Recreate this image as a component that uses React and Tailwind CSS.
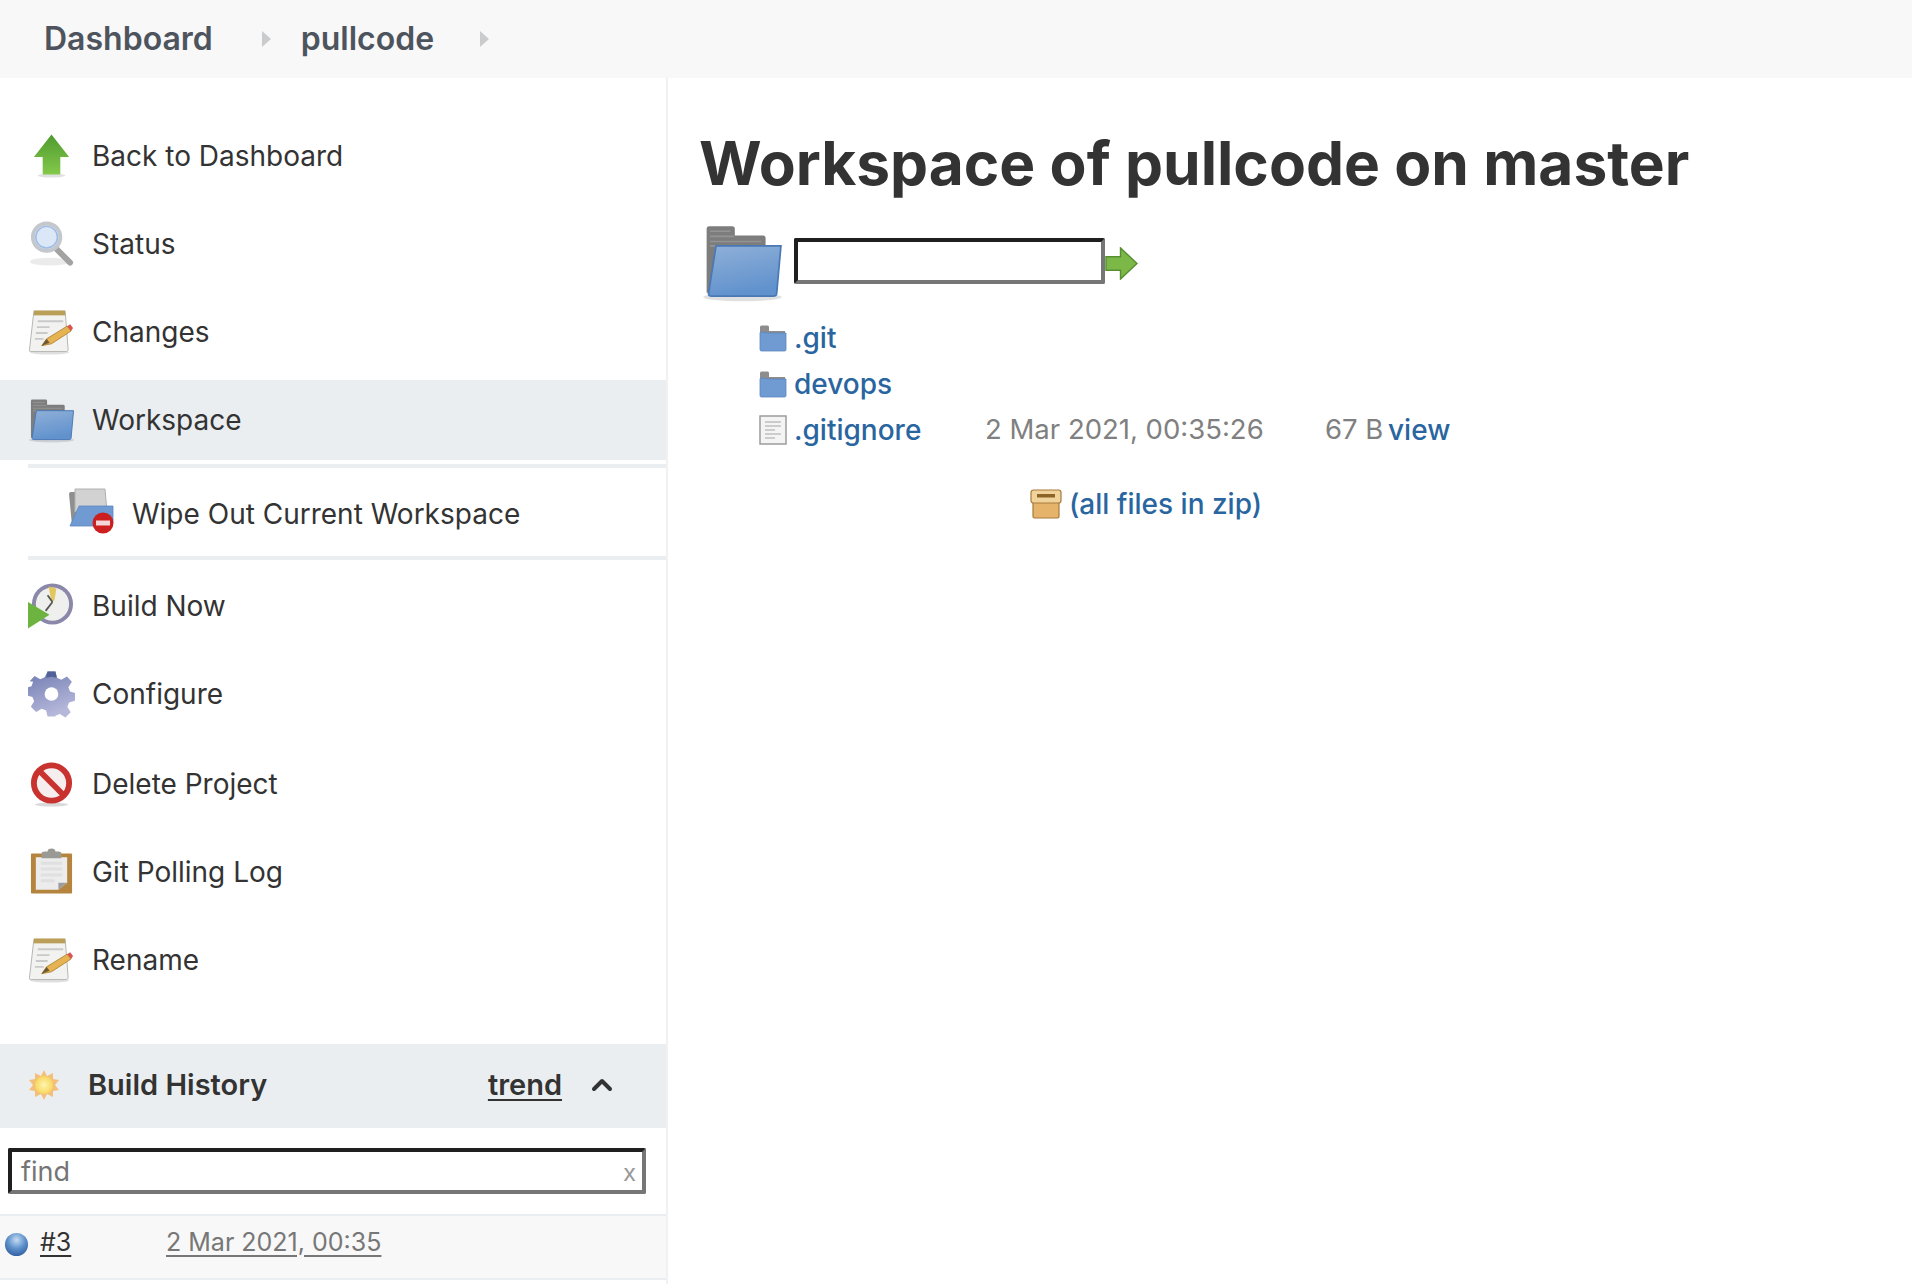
import { useId } from 'react';
import { ChevronUp } from 'lucide-react';

const fontStack = "font-['Inter','Liberation_Sans',sans-serif]";

/* ---------- icons (small redraws of the old Tango style Jenkins icons) ---------- */

const FolderIcon = ({ className }) => {
  const id = useId();
  return (
    <svg viewBox="0 0 48 48" className={className}>
      <defs>
        <linearGradient id={id} x1="0" y1="0" x2="0.300" y2="1">
          <stop offset="0" stopColor="#8fb0d8" />
          <stop offset="1" stopColor="#6192cd" />
        </linearGradient>
      </defs>
      <ellipse cx="24" cy="44.500" rx="23" ry="2.500" fill="#000" opacity="0.12" />
      <path d="M3 42V4.500Q3 3 4.500 3H18q1.500 0 1.500 1.500V8.500H36q1.500 0 1.500 1.500V16H10L6 42Z" fill="#7d7d7d" />
      <path d="M5 6h12M5 9h14M5 12h30M5 14.500h30" stroke="#949494" strokeWidth="1" />
      <path d="M8.500 14.500H46.500L44 42.500Q43.800 44 42 44H6Q3.800 44 4.200 42Z" fill={`url(#${id})`} stroke="#4a78b5" strokeWidth="1" />
    </svg>
  );
};

const SmallFolder = ({ className }) => (
  <svg viewBox="0 0 30 30" className={className}>
    <path d="M2 24V4q0-1.500 1.500-1.500h6q1.500 0 1.500 1.500v4h16v5H2Z" fill="#8d8d8d" />
    <path d="M3 9 11 10 28 10V26.500Q28 28 26.500 28H3.500Q2 28 2 26.500V10Q2 9 3 9Z" fill="#6f9bd2" stroke="#5c87bf" strokeWidth="0.800" />
  </svg>
);

const UpArrow = ({ className }) => {
  const id = useId();
  return (
    <svg viewBox="0 0 48 48" className={className}>
      <defs>
        <linearGradient id={id} x1="0" y1="0" x2="0" y2="1">
          <stop offset="0" stopColor="#4f9a2f" />
          <stop offset="1" stopColor="#83c94a" />
        </linearGradient>
      </defs>
      <ellipse cx="24" cy="44" rx="14" ry="2" fill="#000" opacity="0.12" />
      <path d="M24 2 42 25H33V43H15V25H6Z" fill={`url(#${id})`} />
    </svg>
  );
};

const SearchIcon = ({ className }) => (
  <svg viewBox="0 0 48 48" className={className}>
    <ellipse cx="22" cy="42" rx="20" ry="4" fill="#000" opacity="0.08" />
    <path d="M29 29 43 43" stroke="#a3a3a3" strokeWidth="6" strokeLinecap="round" />
    <circle cx="19" cy="17" r="14" fill="#dbe7f6" stroke="#c4c7cb" strokeWidth="4" />
    <circle cx="19" cy="17" r="11" fill="none" stroke="#9dbce6" strokeWidth="1.500" />
  </svg>
);

const NotepadIcon = ({ className }) => (
  <svg viewBox="0 0 48 48" className={className}>
    <ellipse cx="22" cy="45" rx="20" ry="2" fill="#000" opacity="0.12" />
    <path d="M6 3H38L41 42Q41 44 39 44H3Q1 44 1.500 42Z" fill="#f2f2f0" stroke="#b5b5b0" strokeWidth="1" />
    <rect x="6" y="2" width="32" height="5" fill="#b99f58" />
    <path d="M10 13H36M9 19H22M8 25H20M7 31H16" stroke="#c9c9c9" strokeWidth="2" />
    <path d="M14 38 19 31 40 18 44 23 24 36Z" fill="#e6b352" stroke="#a87a28" strokeWidth="0.800" />
    <path d="M40 18 44 23 46 20 43 16Z" fill="#d9534f" />
    <path d="M14 38 19 31 22 35Z" fill="#6e5a35" />
  </svg>
);

const WipeIcon = ({ className }) => (
  <svg viewBox="0 0 48 48" className={className}>
    <path d="M3 6q0-2 2-2h8l2 3v30H6Z" fill="#8f8f8f" />
    <path d="M9 1H39L41 24H9Z" fill="#d2d2d2" stroke="#b0b0b0" strokeWidth="1" />
    <path d="M13 18 H47V34L42 38H4Z" fill="#6f9bd2" stroke="#5c87bf" strokeWidth="0.800" />
    <circle cx="37" cy="35" r="10.500" fill="#cc1f1f" />
    <rect x="30" y="32.500" width="14" height="5" fill="#f4d6d6" />
  </svg>
);

const BuildIcon = ({ className }) => (
  <svg viewBox="0 0 48 48" className={className}>
    <circle cx="25" cy="22" r="21" fill="#8a87a8" />
    <circle cx="25" cy="22" r="17" fill="#efefee" />
    <path d="M21 4 29 6 27 18 24 20Z" fill="#e2c65e" />
    <path d="M25 20 20 13M25 20 18 29" stroke="#555" strokeWidth="1.800" />
    <path d="M0 20 22 33 0 47Z" fill="#6cb33f" />
  </svg>
);

const GearIcon = ({ className }) => {
  const id = useId();
  return (
    <svg viewBox="0 0 48 48" className={className}>
      <defs>
        <linearGradient id={id} x1="0" y1="0" x2="0.400" y2="1">
          <stop offset="0" stopColor="#6f7bb0" />
          <stop offset="1" stopColor="#b6b8da" />
        </linearGradient>
      </defs>
      <path
        d="M20 1h8l1.500 6.500 4.500 1.900 5.800-3.300 5 5.500-3.500 5.500 1.600 4.400 5.100 1.500v8l-6 1.600-1.800 4.400 3.400 5.600-5.400 5.300-5.700-3.400-4.500 1.800L28 47h-8l-1.500-6.200-4.500-1.800-5.700 3.400-5.400-5.300 3.400-5.600-1.800-4.400-6-1.600v-8l5.100-1.500 1.600-4.400L1.700 11.100l5-5.500L12.500 8.900 17 7z"
        fill={`url(#${id})`}
      />
      <path d="M20 1h8l1.500 6.500-5.500-1-5.500 1z" fill="#4f6196" />
      <circle cx="24" cy="24" r="7" fill="#ffffff" />
    </svg>
  );
};

const DeleteIcon = ({ className }) => (
  <svg viewBox="0 0 48 48" className={className}>
    <ellipse cx="24" cy="45" rx="17" ry="2" fill="#000" opacity="0.15" />
    <circle cx="24" cy="23" r="18" fill="#f6eeee" stroke="#c8322f" strokeWidth="6" />
    <path d="M11 10 37 36" stroke="#c8322f" strokeWidth="6" />
  </svg>
);

const ClipboardIcon = ({ className }) => (
  <svg viewBox="0 0 48 48" className={className}>
    <rect x="3" y="5" width="42" height="41" rx="1" fill="#b5843f" />
    <path d="M8 9H40V35L31 42H8Z" fill="#ececec" />
    <path d="M31 42V35H40Z" fill="#9d9d9d" />
    <path d="M13 15H35M13 21H35M13 27H35M13 33H27" stroke="#e0e0e0" strokeWidth="3" />
    <path d="M14 10V5Q14 3 17 3H20Q20 0 24 0T28 3H31Q34 3 34 5V10Z" fill="#9a9a94" />
  </svg>
);

const SunIcon = ({ className }) => {
  const id = useId();
  return (
    <svg viewBox="0 0 32 32" className={className}>
      <defs>
        <radialGradient id={id}>
          <stop offset="0" stopColor="#fff6b0" />
          <stop offset="1" stopColor="#f8d65e" />
        </radialGradient>
      </defs>
      <path d="M16 1 19 7 25 4 25 10 31 11 27 16 31 21 25 22 25 28 19 25 16 31 13 25 7 28 7 22 1 21 5 16 1 11 7 10 7 4 13 7Z" fill="#f3c07a" />
      <circle cx="16" cy="16" r="9" fill={`url(#${id})`} />
    </svg>
  );
};

const BlueBall = ({ className }) => {
  const id = useId();
  return (
    <svg viewBox="0 0 26 26" className={className}>
      <defs>
        <radialGradient id={id} cx="0.500" cy="0.300" r="0.750">
          <stop offset="0" stopColor="#c6dcf3" />
          <stop offset="0.500" stopColor="#5f92cc" />
          <stop offset="1" stopColor="#2c5a9b" />
        </radialGradient>
      </defs>
      <circle cx="13" cy="13" r="12" fill={`url(#${id})`} />
    </svg>
  );
};

const FileIcon = ({ className }) => (
  <svg viewBox="0 0 30 30" className={className}>
    <rect x="2" y="1" width="26" height="28" fill="#f4f4f4" stroke="#9c9c9c" strokeWidth="1.500" />
    <path d="M7 7H23M7 11H23M7 15H17M7 19H23M7 23H17" stroke="#cccccc" strokeWidth="2" />
  </svg>
);

const BoxIcon = ({ className }) => (
  <svg viewBox="0 0 32 32" className={className}>
    <rect x="3" y="10" width="26" height="20" rx="1.500" fill="#e6b36a" stroke="#a87a3a" strokeWidth="1.200" />
    <rect x="1" y="2" width="30" height="13" rx="2.500" fill="#f0d39b" stroke="#a87a3a" strokeWidth="1.200" />
    <rect x="7" y="6" width="18" height="3.500" fill="#8c6428" />
  </svg>
);

const GoArrow = ({ className }) => (
  <svg viewBox="0 0 34 34" className={className}>
    <path d="M1 10H16V1L33 17 16 33V24H1Z" fill="#7cb848" stroke="#578f30" strokeWidth="1.500" />
  </svg>
);

const Caret = () => <span className="h-0 w-0 border-y-[8px] border-l-[9px] border-y-transparent border-l-[#c9cbcc]" />;

/* ---------- data ---------- */

const topItems = [
  { label: 'Back to Dashboard', icon: UpArrow },
  { label: 'Status', icon: SearchIcon },
  { label: 'Changes', icon: NotepadIcon },
];

const SideItem = ({ label, icon: Icon, className = 'h-[88px]' }) => (
  <div className={`flex items-center gap-[17px] pl-[28px] text-[28px] text-[#333] ${className}`}>
    <Icon className="h-[48px] w-[47px] shrink-0 blur-[0.5px]" />
    <span>{label}</span>
  </div>
);

const App = () => {
  return (
    <div className={`flex h-[1284px] w-[1912px] flex-col overflow-hidden bg-white ${fontStack}`}>
      {/* Breadcrumb bar */}
      <header className="flex h-[78px] shrink-0 items-center bg-[#f8f8f8] pl-[44px] text-[32px] font-semibold text-[#4d545d]">
        <span>Dashboard</span>
        <span className="ml-[49px] flex"><Caret /></span>
        <span className="ml-[30px]">pullcode</span>
        <span className="ml-[46px] flex"><Caret /></span>
      </header>

      <div className="flex min-h-0 flex-1">
        {/* Sidebar */}
        <aside className="w-[668px] shrink-0 border-r-2 border-[#f0f1f3] pt-[34px]">
          {topItems.map((item) => (
            <SideItem key={item.label} {...item} />
          ))}
          <SideItem label="Workspace" icon={FolderIcon} className="mt-[4px] h-[80px] bg-[#ebeef1]" />

          <div className="ml-[28px] mt-[4px] flex h-[96px] items-center gap-[18px] border-y-4 border-[#ebeef1] pl-[38px] text-[28px] text-[#333]">
            <WipeIcon className="h-[48px] w-[48px] shrink-0 blur-[0.5px]" />
            <span className="pt-[3px]">Wipe Out Current Workspace</span>
          </div>

          <SideItem label="Build Now" icon={BuildIcon} className="mt-[2px] h-[88px]" />
          <SideItem label="Configure" icon={GearIcon} />
          <SideItem label="Delete Project" icon={DeleteIcon} className="mt-[2px] h-[88px]" />
          <SideItem label="Git Polling Log" icon={ClipboardIcon} />
          <SideItem label="Rename" icon={NotepadIcon} />

          {/* Build history */}
          <div className="mt-[40px] flex h-[84px] items-center bg-[#ebeef1] pb-[2px] pl-[28px] pr-[48px] text-[29px] font-semibold text-[#333]">
            <SunIcon className="h-[32px] w-[32px] blur-[0.5px]" />
            <span className="ml-[28px]">Build History</span>
            <span className="ml-auto underline underline-offset-4">trend</span>
            <ChevronUp className="ml-[24px] h-[32px] w-[32px]" strokeWidth={3} />
          </div>

          <div className="py-[20px] pl-[8px] pr-[20px]">
            <div className="flex h-[46px] items-center justify-between rounded-[2px] border-4 border-b-[#767676] border-l-[#1f1f1f] border-r-[#767676] border-t-[#1f1f1f] pl-[9px] pr-[6px] pt-[3px] text-[27px] text-[#757575]">
              <span>find</span>
              <span className="text-[24px] text-[#999]">x</span>
            </div>
          </div>

          <div className="flex h-[66px] items-center border-y-2 border-[#ebeef1] bg-[#f8f8f8] pb-[9px] pl-[4px] text-[25px]">
            <BlueBall className="mt-[4px] h-[25px] w-[25px] blur-[0.5px]" />
            <span className="ml-[11px] w-[126px] text-[#333] underline underline-offset-4">#3</span>
            <span className="text-[#777] underline underline-offset-4">2 Mar 2021, 00:35</span>
          </div>
        </aside>

        {/* Workspace content */}
        <main className="min-w-0 flex-1 pl-[31px] pt-[40px]">
          <h1 className="text-[60.4px] font-bold leading-[90px] text-[#333]">Workspace of pullcode on master</h1>

          <div className="mt-[13px] flex items-center">
            <FolderIcon className="-ml-[4px] h-[82px] w-[95px] shrink-0 blur-[0.5px]" />
            <div className="mb-[2px] ml-[4px] h-[46px] w-[311px] rounded-[2px] border-4 border-b-[#767676] border-l-[#1f1f1f] border-r-[#767676] border-t-[#1f1f1f]" />
            <GoArrow className="mt-[2px] h-[33px] w-[33px] blur-[0.3px]" />
          </div>

          {/* File listing */}
          <div className="ml-[59px] mt-[12px] text-[28px] font-medium text-[#29659f]">
            <div className="flex h-[46px] items-center">
              <SmallFolder className="h-[30px] w-[30px] blur-[0.3px]" />
              <span className="ml-[6px]">.git</span>
            </div>
            <div className="flex h-[46px] items-center">
              <SmallFolder className="h-[30px] w-[30px] blur-[0.3px]" />
              <span className="ml-[6px]">devops</span>
            </div>
            <div className="flex h-[46px] items-center">
              <FileIcon className="h-[30px] w-[30px] blur-[0.3px]" />
              <span className="ml-[6px] w-[191px]">.gitignore</span>
              <span className="w-[340px] text-[27.5px] font-normal text-[#808080]">2 Mar 2021, 00:35:26</span>
              <span className="w-[63px] text-[27.5px] font-normal text-[#808080]">67 B</span>
              <span>view</span>
            </div>
          </div>

          <div className="ml-[331px] mt-[30px] flex items-center text-[28px] font-medium text-[#29659f]">
            <BoxIcon className="h-[32px] w-[32px] blur-[0.3px]" />
            <span className="ml-[7px]">(all files in zip)</span>
          </div>
        </main>
      </div>
    </div>
  );
};

export default App;
